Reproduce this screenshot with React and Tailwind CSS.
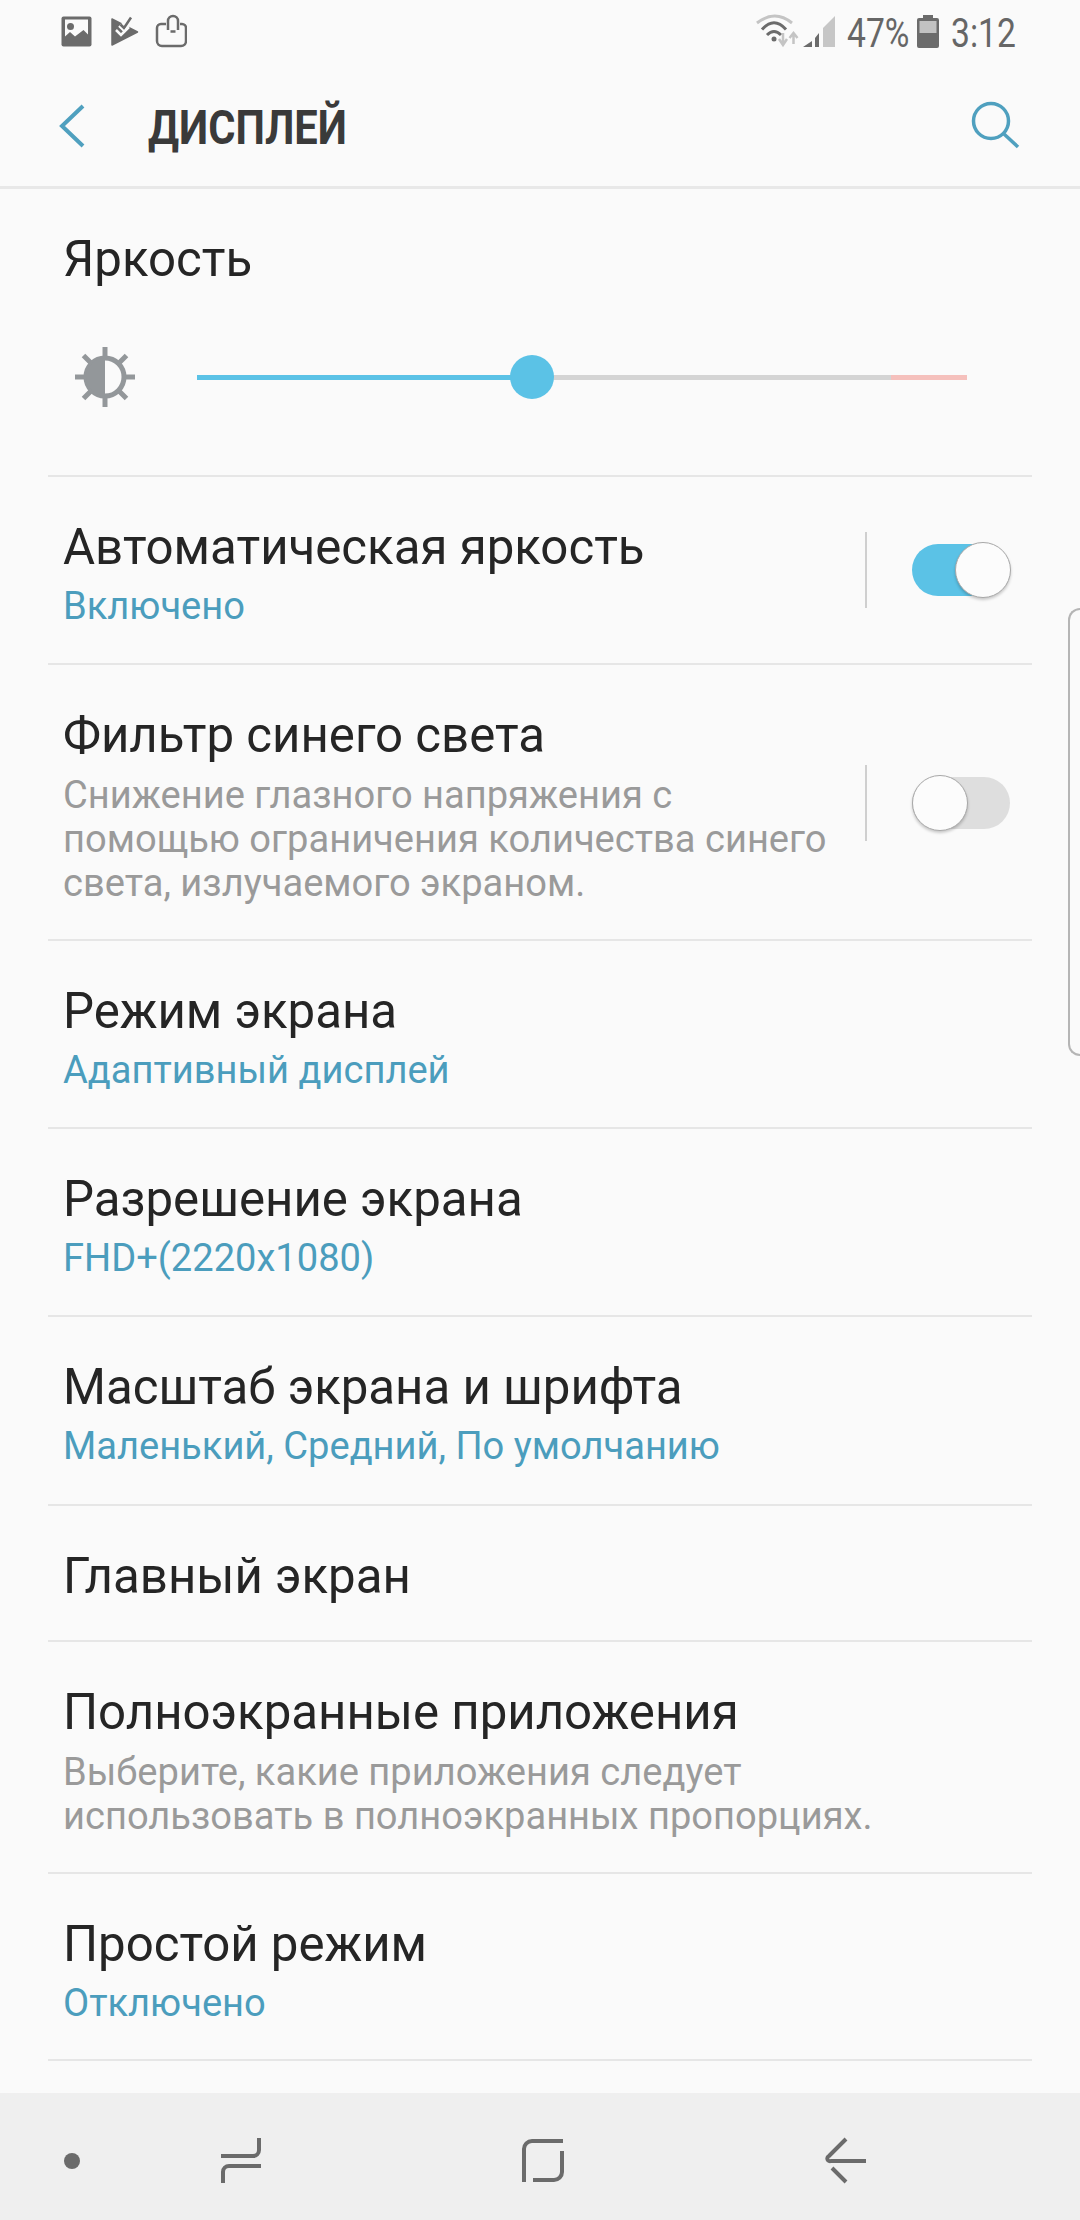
import React from "react";

const FONT = "font-['Roboto','Liberation_Sans',sans-serif]";

function Toggle({ on }) {
  return (
    <div className="flex items-center h-[76px]">
      <div className="w-[2px] h-[76px] bg-[#cfcfcf]" />
      <div className="relative ml-[45px] w-[98px] h-[52px]">
        <div className={`w-full h-full rounded-full ${on ? "bg-[#5bc2e6]" : "bg-[#dedede]"}`} />
        <div className={`absolute top-[-2.5px] ${on ? "right-[-1px]" : "left-0"} w-[56px] h-[56px] rounded-full bg-[#fcfcfc] border-[1.5px] border-[#a8a8a8] shadow-[0_2px_3px_rgba(0,0,0,0.2)]`} />
      </div>
    </div>
  );
}

function Row({ title, sub, toggle, h, lines, toggleTop }) {
  return (
    <div className={`relative flex mx-[48px] px-[16px] border-b-2 border-[#e6e6e6] ${h}`}>
      <div className="flex-1 pt-[42px]">
        <div className="text-[49.2px] leading-[56px] text-[#252525] whitespace-nowrap -ml-[1px]">{title}</div>
        {sub && <div className="text-[#4b9dbd] text-[38.1px] leading-[44px] mt-[9px] whitespace-nowrap -ml-[1px]">{sub}</div>}
        {lines && (
          <div className="text-[#9a9a9a] text-[38.1px] leading-[44px] mt-[10px] whitespace-nowrap -ml-[1px]">
            {lines.map((l) => <div key={l}>{l}</div>)}
          </div>
        )}
      </div>
      {toggle !== undefined && (
        <div className={`absolute left-[817px] ${toggleTop}`}><Toggle on={toggle} /></div>
      )}
    </div>
  );
}

const G = "#6b6b6b";
const L = "#c4c4c4";

function StatusBar() {
  return (
    <div className="flex items-start h-[60px] pl-[61px] pr-[65px] pt-[14px]">
      <svg width="32" height="32" viewBox="0 0 32 32" className="mt-[2px] shrink-0">
        <rect x="0.500" y="0.500" width="30" height="30" rx="2" fill={G} />
        <rect x="4" y="3.500" width="23" height="23" fill="#fafafa" />
        <circle cx="9.500" cy="10.500" r="3.500" fill={G} />
        <path d="M4 27V20.500l5-4.500 5 4.500L22.500 14l4.500 4.500V27z" fill={G} />
      </svg>
      <svg width="30" height="32" viewBox="0 0 30 32" className="ml-[17px] mt-[2px] shrink-0">
        <path d="M2 3l25.500 13L2 29z" fill={G} stroke={G} strokeLinejoin="round" strokeWidth="1.500" />
        <path d="M10.500 8.500l3.500 3.500L21 1.500" fill="none" stroke="#fafafa" strokeWidth="6.500" />
        <path d="M10.500 8.500l3.500 3.500L21 1.500" fill="none" stroke={G} strokeWidth="2.500" />
        <path d="M6 14l5 5 8-8" fill="none" stroke="#fafafa" strokeWidth="2.500" />
      </svg>
      <svg width="32" height="34" viewBox="0 0 32 34" className="ml-[15px] shrink-0">
        <path d="M11 10H6a4 4 0 0 0-4 4V27a5 5 0 0 0 5 5H26a5 5 0 0 0 5-5V14a4 4 0 0 0-4-4H25" fill="none" stroke={G} strokeWidth="2.500" />
        <path d="M13 16V7a5 5 0 0 1 10 0V16M15.500 17.500h5" fill="none" stroke={G} strokeWidth="2.500" />
      </svg>
      <div className="flex-1" />
      <svg width="90" height="46" viewBox="0 0 90 46" className="-mt-[6px] shrink-0">
        <path d="M7 15Q25 1 42 15" fill="none" stroke={L} strokeWidth="3" />
        <path d="M12 21.500Q24 8 36 21.500" fill="none" stroke={G} strokeWidth="3" />
        <path d="M17 27Q24 20 31 27" fill="none" stroke={G} strokeWidth="3" />
        <circle cx="24" cy="31" r="2.500" fill={G} />
        <path d="M33 25V37M29 31l4 6 4-6" fill="none" stroke={L} strokeWidth="2.500" />
        <path d="M43.500 36V25M39.500 30l4-5 4 5" fill="none" stroke={L} strokeWidth="2.500" />
        <path d="M53 39l9-6v6zM65 39V30l4-5v14z" fill={G} />
        <path d="M73 39V20L85 8v31z" fill="#c6c6c6" />
      </svg>
      <div className="ml-[7px] w-[62px] text-[40px] leading-[40px] text-[#666666] origin-left scale-x-[0.84] whitespace-nowrap">47%</div>
      <svg width="22" height="33" viewBox="0 0 22 33" className="ml-[8px] mt-[1px] shrink-0">
        <path d="M6 0h10v3h4a2 2 0 0 1 2 2v26a2 2 0 0 1-2 2H2a2 2 0 0 1-2-2V5a2 2 0 0 1 2-2h4z" fill={G} />
        <rect x="2.500" y="6" width="17" height="12" fill="#c2c2c2" />
      </svg>
      <div className="ml-[12px] w-[64px] text-[40px] leading-[40px] text-[#666666] origin-left scale-x-[0.84] whitespace-nowrap">3:12</div>
    </div>
  );
}

function Header() {
  return (
    <div className="flex items-center h-[129px] pt-[6px] pl-[58px] pr-[60px] border-b-[3px] border-[#e8e8e8]">
      <svg width="28" height="44" viewBox="0 0 28 44" className="shrink-0">
        <path d="M25 2L4 22l21 20" fill="none" stroke="#4fa0bf" strokeWidth="4" />
      </svg>
      <div className="ml-[62px] flex-1 pt-[3px] text-[49px] leading-[56px] font-bold text-[#3a3a3a] origin-left scale-x-[0.85] whitespace-nowrap">ДИСПЛЕЙ</div>
      <svg width="50" height="50" viewBox="0 0 50 50" className="-mt-[2px] shrink-0">
        <circle cx="21" cy="21" r="17.500" fill="none" stroke="#4fa0bf" strokeWidth="3.500" />
        <path d="M34 34l14 13" fill="none" stroke="#4fa0bf" strokeWidth="3.500" />
      </svg>
    </div>
  );
}

function Brightness() {
  return (
    <div className="mx-[48px] h-[288px] border-b-2 border-[#e6e6e6] px-[16px]">
      <div className="pt-[42px] text-[49.2px] leading-[56px] text-[#252525] -ml-[1px]">Яркость</div>
      <div className="flex items-center mt-[58px] h-[64px] ml-[10px]">
        <svg width="62" height="62" viewBox="0 0 62 62" className="shrink-0">
          <g stroke="#93979a" strokeWidth="5">
            <path d="M31 1v12M31 49v12M1 31h12M49 31h12M9.500 9.500l8 8M44.500 44.500l8 8M9.500 52.500l8-8M44.500 17.500l8-8" />
          </g>
          <circle cx="31" cy="31" r="19" fill="#fafafa" stroke="#93979a" strokeWidth="5" />
          <path d="M31 12a19 19 0 0 0 0 38z" fill="#93979a" />
        </svg>
        <div className="relative flex ml-[61px] w-[770px] h-[5px]">
          <div className="w-[335px] bg-[#5bc2e6]" />
          <div className="w-[359px] bg-[#d4d4d4]" />
          <div className="w-[76px] bg-[#f5c0bc]" />
          <div className="absolute left-[313px] top-[-20px] w-[44px] h-[44px] rounded-full bg-[#5bc2e6]" />
        </div>
      </div>
    </div>
  );
}

function NavBar() {
  return (
    <div className="flex-1 relative flex items-center pt-[8px] bg-[#efefef]">
      <div className="ml-[64px] w-[16px] h-[16px] rounded-full bg-[#6b6b6b]" />
      <svg width="46" height="50" viewBox="0 0 46 50" className="ml-[138px] shrink-0">
        <path d="M41 2V14a6 6 0 0 1-6 6H3M43 30H11a6 6 0 0 0-6 6V47" fill="none" stroke={G} strokeWidth="4" />
      </svg>
      <svg width="48" height="50" viewBox="0 0 48 50" className="ml-[256px] shrink-0">
        <path d="M43 5H12a8 8 0 0 0-8 8V46M42 15V36a8 8 0 0 1-8 8H13" fill="none" stroke={G} strokeWidth="4" />
      </svg>
      <svg width="46" height="50" viewBox="0 0 46 50" className="ml-[254px] shrink-0">
        <path d="M24 3L7 20a2.500 2.500 0 0 0 2 5H44M10 32L24 46" fill="none" stroke={G} strokeWidth="4" />
      </svg>
    </div>
  );
}

export default function App() {
  return (
    <div className={`relative w-[1080px] h-[2220px] overflow-hidden flex flex-col bg-[#fafafa] ${FONT}`}>
      <StatusBar />
      <Header />
      <Brightness />
      <Row h="h-[188px]" title="Автоматическая яркость" sub="Включено" toggle={true} toggleTop="top-[55px]" />
      <Row h="h-[276px]" title="Фильтр синего света" lines={["Снижение глазного напряжения с", "помощью ограничения количества синего", "света, излучаемого экраном."]} toggle={false} toggleTop="top-[100px]" />
      <Row h="h-[188px]" title="Режим экрана" sub="Адаптивный дисплей" />
      <Row h="h-[188px]" title="Разрешение экрана" sub="FHD+(2220x1080)" />
      <Row h="h-[189px]" title="Масштаб экрана и шрифта" sub="Маленький, Средний, По умолчанию" />
      <Row h="h-[136px]" title="Главный экран" />
      <Row h="h-[232px]" title="Полноэкранные приложения" lines={["Выберите, какие приложения следует", "использовать в полноэкранных пропорциях."]} />
      <Row h="h-[187px]" title="Простой режим" sub="Отключено" />
      <div className="h-[32px]" />
      <NavBar />
      <div className="absolute right-0 top-[608px] w-[12px] h-[448px] rounded-l-[12px] border-l-2 border-y-2 border-[#b5b5b5]" />
    </div>
  );
}
